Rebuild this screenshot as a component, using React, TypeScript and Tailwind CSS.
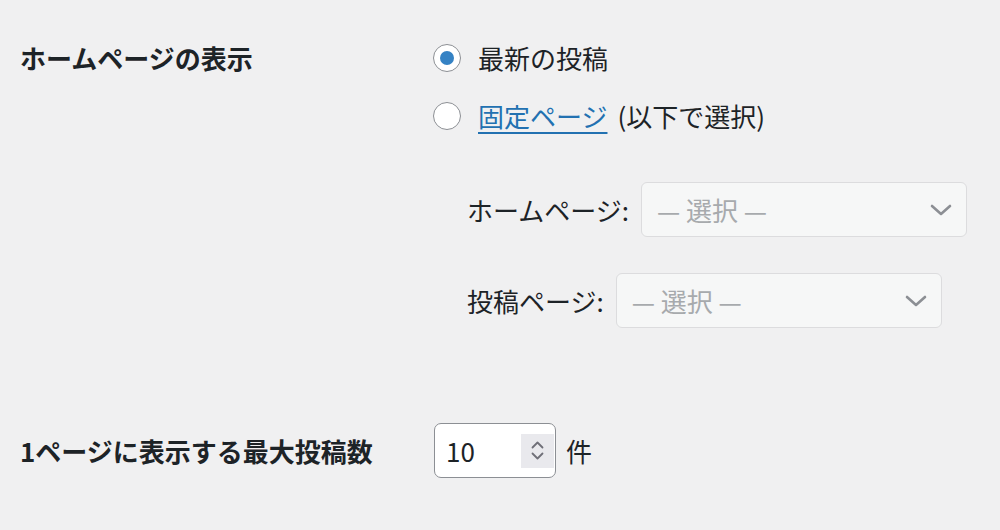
import { useState } from "react";

function Radio({ checked }: { checked: boolean }) {
  return (
    <span className="flex size-[28px] shrink-0 items-center justify-center rounded-full border-[1.5px] border-[#8c8f94] bg-white">
      {checked ? <span className="size-[14px] rounded-full bg-[#3582c4]" /> : null}
    </span>
  );
}

function SelectBox({ label }: { label: string }) {
  return (
    <div className="flex items-center gap-[12px]">
      <span>{label}</span>
      <div className="flex h-[55px] w-[326px] items-center justify-between rounded-[6px] border-[1.5px] border-[#dcdcde] bg-[#f6f7f7] pr-[14px] pl-[15px] text-[#a7aaad]">
        <span>— 選択 —</span>
        <svg width="22" height="14" viewBox="0 0 22 14" fill="none" aria-hidden="true">
          <path d="M2 3l9 8 9-8" stroke="#8c8f94" strokeWidth="2.6" strokeLinecap="round" strokeLinejoin="round" />
        </svg>
      </div>
    </div>
  );
}

function NumberInput({ value }: { value: number }) {
  return (
    <div className="ml-[1px] flex h-[55px] w-[122px] items-center rounded-[7px] border-[1.5px] border-[#8c8f94] bg-white pr-[1px]">
      <span className="flex-1 pl-[11px] text-[#1d2327]">{value}</span>
      <span className="flex h-[34px] w-[33px] flex-col items-center justify-center gap-[3px] bg-[#e9e9ed]">
        <svg width="13" height="8" viewBox="0 0 13 8" fill="none" aria-hidden="true">
          <path d="M1.5 6.5l5-5 5 5" stroke="#6f6f78" strokeWidth="1.8" strokeLinecap="round" strokeLinejoin="round" />
        </svg>
        <svg width="13" height="8" viewBox="0 0 13 8" fill="none" aria-hidden="true">
          <path d="M1.5 1.5l5 5 5-5" stroke="#6f6f78" strokeWidth="1.8" strokeLinecap="round" strokeLinejoin="round" />
        </svg>
      </span>
    </div>
  );
}

export default function App() {
  const [front] = useState<"posts" | "page">("posts");

  return (
    <div className="min-h-[530px] w-full bg-[#f0f0f1] px-5 pt-[44px] font-['Noto_Sans_CJK_JP',sans-serif] text-[26px] leading-[28px] text-[#1d2327]">
      <div className="flex">
        <div className="flex h-[28px] w-[413px] shrink-0 items-center font-bold">ホームページの表示</div>
        <div className="flex flex-col">
          <label className="flex h-[28px] items-center gap-[17px]">
            <Radio checked={front === "posts"} />
            <span>最新の投稿</span>
          </label>
          <label className="mt-[30px] flex h-[28px] items-center gap-[17px]">
            <Radio checked={front === "page"} />
            <span>
              <a href="#" className="text-[#2271b1] underline decoration-[1.5px] underline-offset-[5px]">
                固定ページ
              </a>
              <span className="ml-[10px]">(以下で選択)</span>
            </span>
          </label>
          <ul className="mt-[52px] ml-[34px] flex flex-col gap-[36px]">
            <li>
              <SelectBox label="ホームページ:" />
            </li>
            <li>
              <SelectBox label="投稿ページ:" />
            </li>
          </ul>
        </div>
      </div>

      <div className="mt-[95px] flex items-center">
        <div className="w-[413px] shrink-0 font-bold">1ページに表示する最大投稿数</div>
        <NumberInput value={10} />
        <span className="ml-[10px]">件</span>
      </div>
    </div>
  );
}
